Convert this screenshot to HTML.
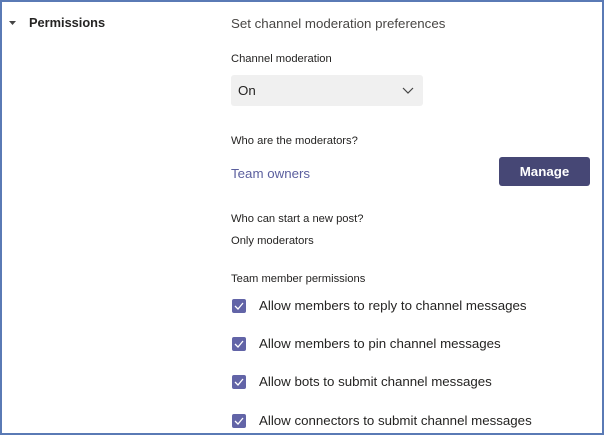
<!DOCTYPE html>
<html><head><style>
html,body{margin:0;padding:0;}
body{width:604px;height:435px;position:relative;background:#fff;font-family:"Liberation Sans",sans-serif;color:#252423;overflow:hidden;}
.frame{position:absolute;left:0;top:0;width:600px;height:431px;border:2px solid #5a7ab5;}
.t{position:absolute;white-space:nowrap;}
.cb{position:absolute;left:232px;width:14px;height:14px;background:#6264a7;border-radius:2px;}
.cb svg{position:absolute;left:2px;top:3px;}
.lbl{position:absolute;left:259px;font-size:13.3px;color:#252423;white-space:nowrap;}
</style></head><body>
<div class="frame"></div>
<svg style="position:absolute;left:9px;top:20px" width="8" height="6"><path d="M0 1 L7 1 L3.5 5 Z" fill="#444"/></svg>
<div class="t" style="left:29px;top:15px;font-size:12.8px;font-weight:bold;">Permissions</div>
<div class="t" style="left:231px;top:16px;font-size:13.3px;color:#484644;">Set channel moderation preferences</div>
<div class="t" style="left:231px;top:53px;font-size:11.2px;">Channel moderation</div>
<div style="position:absolute;left:231px;top:75px;width:192px;height:31px;background:#f0f0f0;border-radius:3px;"></div>
<div class="t" style="left:238px;top:83px;font-size:13.3px;">On</div>
<svg style="position:absolute;left:402px;top:87px" width="12" height="8"><path d="M1 1 L6 6 L11 1" stroke="#444" stroke-width="1.2" fill="none"/></svg>
<div class="t" style="left:231px;top:135px;font-size:11.2px;">Who are the moderators?</div>
<div class="t" style="left:231px;top:166px;font-size:13.3px;color:#5b5f9e;">Team owners</div>
<div style="position:absolute;left:499px;top:157px;width:91px;height:29px;background:#464775;border-radius:3px;color:#fff;font-size:13.3px;font-weight:bold;text-align:center;line-height:29px;">Manage</div>
<div class="t" style="left:231px;top:213px;font-size:11.2px;">Who can start a new post?</div>
<div class="t" style="left:231px;top:235px;font-size:11.2px;">Only moderators</div>
<div class="t" style="left:231px;top:273px;font-size:11.2px;">Team member permissions</div>
<div class="cb" style="top:299px"><svg width="10" height="8"><path d="M1 4 L4 7 L9 1" stroke="#fff" stroke-width="1.3" fill="none"/></svg></div>
<div class="lbl" style="top:298px">Allow members to reply to channel messages</div>
<div class="cb" style="top:337px"><svg width="10" height="8"><path d="M1 4 L4 7 L9 1" stroke="#fff" stroke-width="1.3" fill="none"/></svg></div>
<div class="lbl" style="top:336px">Allow members to pin channel messages</div>
<div class="cb" style="top:375px"><svg width="10" height="8"><path d="M1 4 L4 7 L9 1" stroke="#fff" stroke-width="1.3" fill="none"/></svg></div>
<div class="lbl" style="top:374px">Allow bots to submit channel messages</div>
<div class="cb" style="top:414px"><svg width="10" height="8"><path d="M1 4 L4 7 L9 1" stroke="#fff" stroke-width="1.3" fill="none"/></svg></div>
<div class="lbl" style="top:413px">Allow connectors to submit channel messages</div>
</body></html>
